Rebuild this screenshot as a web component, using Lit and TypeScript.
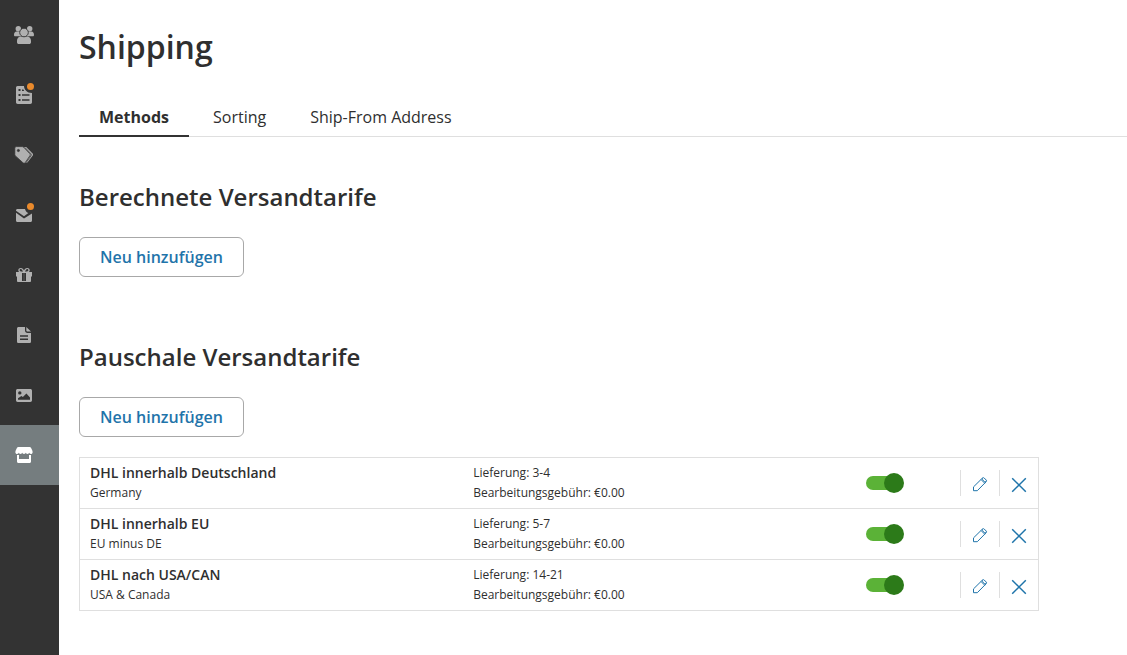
import { LitElement, html, css, svg, nothing } from "lit";
import { customElement, state } from "lit/decorators.js";

interface NavItem {
  label: string;
  icon: unknown;
  badge?: boolean;
}

interface ShippingRate {
  name: string;
  region: string;
  delivery: string;
  fee: string;
  enabled: boolean;
}

const icons = {
  customers: svg`
    <circle cx="4.300" cy="3.700" r="2.700"/><circle cx="15.700" cy="3.700" r="2.700"/>
    <path d="M2.600 6.600h5v4.600H1.300C.5 11.200 0 10.700 0 9.900 0 8.300 1 6.600 2.600 6.600zM17.400 6.600h-5v4.600h6.300c.8 0 1.300-.5 1.300-1.300 0-1.600-1-3.300-2.600-3.300z"/>
    <path d="M6.300 11.400h7.400c2 .4 3.300 2 3.300 4.300v1.500c0 1.100-.8 1.800-1.800 1.800H4.800c-1 0-1.800-.7-1.800-1.800v-1.500c0-2.300 1.300-3.900 3.300-4.300z"/>
    <circle cx="10" cy="7.500" r="4.300" stroke="#333" stroke-width="0.900"/>`,
  orders: svg`
    <path fill-rule="evenodd" d="M3.500 1H10c0 3.500 3 7 8 7v9.300c0 .9-.8 1.700-1.700 1.700H3.700C2.800 19 2 18.200 2 17.300V2.700C2 1.800 2.700 1 3.500 1zM4.500 4v2h2V4zM8 4.500V6h2.200l-.8-1.500zM4.500 9v2h2V9zM8 9.300v1.400h7.500V9.300zM4.500 14v2h2v-2zM8 14.200v1.500h7.500v-1.500z"/>`,
  catalog: svg`
    <path d="M9.500 2h2.700l6.200 6.200c.8.800.8 1.700.2 2.600l-5.200 6.700h-3z"/>
    <path fill-rule="evenodd" stroke="#333" stroke-width="0.800" d="M.8 3.400C.8 2.300 1.500 1.600 2.500 1.600h5.700c.6 0 1.100.2 1.500.6l6 6.400c.7.700.7 1.500.1 2.300l-4.500 6.600c-.6.900-1.600.9-2.400.2L1.400 10.900C1 10.500.8 10.100.8 9.500zM4.400 4.400a1.100 1.100 0 1 0 0 2.200 1.100 1.100 0 0 0 0-2.200z"/>
    <path d="M10.800 2.400l6.100 6.400c.6.600.6 1.300.1 2L12.300 17.300" fill="none" stroke="#333" stroke-width="0.700"/>`,
  marketing: svg`
    <path d="M3.500 4H11c.4 1.900 1.600 3.300 3.400 4.100L10 11.300 2 5.700C2 4.700 2.600 4 3.500 4zM18 8.500v7c0 .9-.6 1.500-1.500 1.500h-13C2.600 17 2 16.400 2 15.500V7.800l8 5.600z"/>`,
  promotions: svg`
    <path fill-rule="evenodd" d="M2 7h3.200C4.500 6.500 4.300 5.900 4.300 5.300c0-1.500 1.100-2.300 2.500-2.300C8.400 3 9.400 4 10 5.400 10.600 4 11.600 3 13.200 3c1.400 0 2.500.8 2.500 2.300 0 .6-.2 1.200-.9 1.700H18v4.500h-1v4.300c0 .8-.4 1.200-1.200 1.200H4.200c-.8 0-1.200-.4-1.200-1.200v-4.300H2zM6.800 4.100c-.7 0-1.200.5-1.200 1.200 0 .9.800 1.400 3.200 1.400-.4-1.500-1-2.600-2-2.600zm6.400 0c-1 0-1.600 1.100-2 2.600 2.400 0 3.200-.5 3.200-1.400 0-.7-.5-1.200-1.200-1.200zM8 8v8h4V8z"/><path d="M9.400 8h1.200v8H9.400z" opacity=".25"/>`,
  website: svg`
    <path fill-rule="evenodd" d="M4.600 2H11v3.500C11 7 12 8 13.500 8H17v8.400c0 .9-.7 1.600-1.600 1.600H4.600C3.700 18 3 17.300 3 16.400V3.600C3 2.700 3.700 2 4.600 2zM6 10.300v1.400h8v-1.400zM6 13.500V15h8v-1.500z"/><path d="M12.300 2L17 6.600h-3.300c-.8 0-1.400-.6-1.400-1.400z"/>`,
  media: svg`
    <path fill-rule="evenodd" d="M3.700 4h12.600c1 0 1.700.7 1.700 1.700v9.600c0 1-.7 1.700-1.700 1.700H3.700c-1 0-1.700-.7-1.700-1.700V5.700C2 4.700 2.700 4 3.700 4zM5.800 6.200a1.700 1.700 0 1 0 0 3.400 1.700 1.700 0 0 0 0-3.400zM4 14.800h12v-2.400l-3.600-4-3.500 3.500-1.500-1L4 13.200z"/>`,
  store: svg`
    <path d="M4.400 2h11.200c.7 0 1.200.3 1.500.9l1.200 2.600c.3.700.3 1.500.3 2 0 .8-.8 1.500-1.700 1.500s-1.700-.7-1.700-1.400c0 .7-.8 1.400-1.700 1.400s-1.700-.7-1.700-1.400c0 .7-.8 1.400-1.800 1.400s-1.800-.7-1.800-1.400c0 .7-.8 1.400-1.700 1.400s-1.700-.7-1.700-1.400c0 .7-.8 1.400-1.700 1.400S1.400 8.300 1.400 7.500c0-.5 0-1.300.3-2l1.200-2.600c.3-.6.8-.9 1.500-.9z"/>
    <path d="M3 10h2v4h10v-4h2v6.500c0 .9-.6 1.500-1.500 1.500h-11C3.600 18 3 17.400 3 16.500z"/>`,
};

const navItems: NavItem[] = [
  { label: "Customers", icon: icons.customers },
  { label: "Orders", icon: icons.orders, badge: true },
  { label: "Catalog", icon: icons.catalog },
  { label: "Marketing", icon: icons.marketing, badge: true },
  { label: "Promotions", icon: icons.promotions },
  { label: "Website", icon: icons.website },
  { label: "Media", icon: icons.media },
  { label: "Store", icon: icons.store },
];

@customElement("side-nav")
class SideNav extends LitElement {
  static styles = css`
    :host {
      display: block;
      background: #333;
    }
    .list {
      display: flex;
      flex-direction: column;
      padding-top: 5px;
    }
    .item {
      display: flex;
      align-items: center;
      height: 60px;
      padding-left: 14px;
      color: #b0b0b0;
    }
    .item.current {
      background: #757d7f;
      color: #fff;
    }
    .glyph {
      position: relative;
      width: 20px;
      height: 20px;
    }
    .glyph svg {
      display: block;
      width: 20px;
      height: 20px;
      fill: currentColor;
    }
    .badge {
      position: absolute;
      top: -2px;
      right: 0;
      width: 7px;
      height: 7px;
      border-radius: 50%;
      background: #ea8a2c;
    }
  `;

  render() {
    return html`<nav class="list" aria-label="Main">
      ${navItems.map(
        (item) => html`<a
          class="item ${item.label === "Store" ? "current" : ""}"
          href="#"
          aria-label=${item.label}
        >
          <span class="glyph">
            <svg viewBox="0 0 20 20" aria-hidden="true">${item.icon}</svg>
            ${item.badge ? html`<span class="badge"></span>` : nothing}
          </span>
        </a>`
      )}
    </nav>`;
  }
}

@customElement("rate-table")
class RateTable extends LitElement {
  static styles = css`
    :host {
      display: block;
      max-width: 960px;
    }
    .table {
      width: 100%;
      table-layout: fixed;
      border-collapse: separate;
      border-spacing: 0;
      border: 1px solid #dfdfdf;
      border-bottom: 0;
    }
    .cell {
      padding: 5px 10px;
      text-align: left;
      vertical-align: middle;
      font-size: 12px;
      font-weight: 400;
      line-height: 20px;
      border-bottom: 1px solid #dfdfdf;
    }
    .name {
      font-size: 14px;
      font-weight: 600;
    }
    .col-info {
      width: 40%;
    }
    .col-switch {
      width: 104px;
    }
    .col-actions {
      width: 78px;
    }
    .cell.flush {
      padding: 0;
    }
    .switch {
      appearance: none;
      display: block;
      position: relative;
      width: 34px;
      height: 14px;
      margin: 0 0 0 10px;
      border-radius: 7px;
      background: #b8b8b8;
      cursor: pointer;
    }
    .switch::before {
      content: "";
      position: absolute;
      top: -3px;
      left: -2px;
      width: 20px;
      height: 20px;
      border-radius: 50%;
      background: #777;
    }
    .switch:checked {
      background: #5bb237;
    }
    .switch:checked::before {
      left: 18px;
      background: #2c7a19;
    }
    .actions {
      display: flex;
    }
    .action {
      box-sizing: border-box;
      display: flex;
      flex: 1;
      align-items: center;
      justify-content: center;
      height: 26px;
      padding: 4px 0 0;
      border: 0;
      border-left: 1px solid #dfdfdf;
      background: none;
      color: #1f74aa;
      cursor: pointer;
    }
    .action svg {
      width: 16px;
      height: 16px;
      fill: none;
      stroke: currentColor;
    }
  `;

  @state()
  private rates: ShippingRate[] = [
    { name: "DHL innerhalb Deutschland", region: "Germany", delivery: "3-4", fee: "€0.00", enabled: true },
    { name: "DHL innerhalb EU", region: "EU minus DE", delivery: "5-7", fee: "€0.00", enabled: true },
    { name: "DHL nach USA/CAN", region: "USA & Canada", delivery: "14-21", fee: "€0.00", enabled: true },
  ];

  private toggle(index: number) {
    this.rates = this.rates.map((rate, i) =>
      i === index ? { ...rate, enabled: !rate.enabled } : rate
    );
  }

  private remove(index: number) {
    this.rates = this.rates.filter((_, i) => i !== index);
  }

  render() {
    return html`<table class="table">
      <colgroup>
        <col class="col-info" />
        <col />
        <col class="col-switch" />
        <col class="col-actions" />
      </colgroup>
      <tbody>
        ${this.rates.map(
          (rate, i) => html`<tr>
            <th class="cell" scope="row">
              <div class="name">${rate.name}</div>
              <div>${rate.region}</div>
            </th>
            <td class="cell">
              <div>Lieferung: ${rate.delivery}</div>
              <div>Bearbeitungsgebühr: ${rate.fee}</div>
            </td>
            <td class="cell flush">
              <input
                class="switch"
                type="checkbox"
                role="switch"
                aria-label=${rate.name}
                .checked=${rate.enabled}
                @change=${() => this.toggle(i)}
              />
            </td>
            <td class="cell flush">
              <div class="actions">
                <button class="action" type="button" aria-label="Edit">
                  <svg viewBox="0 0 16 16" aria-hidden="true">
                    <path d="M1.500 13.700v-3.800l9-8.900c.5-.5 1.200-.5 1.700 0l2 2c.5.500.5 1.200 0 1.700l-8.900 9zM9 2.500L12.700 6.200M10.300 1.200c.1 2 1.700 3.600 3.700 3.700" />
                  </svg>
                </button>
                <button class="action" type="button" aria-label="Delete" @click=${() => this.remove(i)}>
                  <svg viewBox="0 0 16 16" aria-hidden="true">
                    <path d="M1.200 1.200l13.600 13.600M14.800 1.200L1.200 14.800" stroke-width="1.500" />
                  </svg>
                </button>
              </div>
            </td>
          </tr>`
        )}
      </tbody>
    </table>`;
  }
}

@customElement("app-root")
class AppRoot extends LitElement {
  static styles = css`
    :host {
      display: grid;
      grid-template-columns: 59px 1fr;
      min-height: 100vh;
      background: #fff;
      color: #2f2f2f;
      font-family: "Open Sans", "Noto Sans", sans-serif;
    }
    .page {
      min-width: 0;
      padding: 23px 0 24px 20px;
    }
    .title {
      margin: 0;
      font-size: 32px;
      font-weight: 600;
      line-height: 48px;
    }
    .tabs {
      display: flex;
      gap: 4px;
      margin-top: 26px;
      border-bottom: 1px solid #dfdfdf;
    }
    .tab {
      padding: 8px 20px 6px;
      margin-bottom: -1px;
      border-bottom: 2px solid transparent;
      color: inherit;
      font-size: 16px;
      line-height: 24px;
      text-decoration: none;
    }
    .tab.active {
      border-color: #333;
      font-weight: 700;
    }
    .section {
      padding: 40px 88px 0 0;
    }
    .heading {
      margin: 0;
      font-size: 24px;
      font-weight: 600;
      line-height: 40px;
    }
    .add {
      display: block;
      height: 40px;
      margin: 20px 0;
      padding: 0 20px;
      border: 1px solid #a8a8a8;
      border-radius: 6px;
      background: #fff;
      color: #1f74aa;
      font-family: inherit;
      font-size: 16px;
      font-weight: 600;
      cursor: pointer;
    }
  `;

  @state()
  private tab = "Methods";

  private select(event: Event, tab: string) {
    event.preventDefault();
    this.tab = tab;
  }

  render() {
    return html`
      <side-nav></side-nav>
      <main class="page">
        <h1 class="title">Shipping</h1>
        <nav class="tabs" aria-label="Shipping">
          ${["Methods", "Sorting", "Ship-From Address"].map(
            (tab) => html`<a
              class="tab ${tab === this.tab ? "active" : ""}"
              href="#"
              @click=${(e: Event) => this.select(e, tab)}
              >${tab}</a
            >`
          )}
        </nav>
        <section class="section">
          <h2 class="heading">Berechnete Versandtarife</h2>
          <button class="add" type="button">Neu hinzufügen</button>
        </section>
        <section class="section">
          <h2 class="heading">Pauschale Versandtarife</h2>
          <button class="add" type="button">Neu hinzufügen</button>
          <rate-table></rate-table>
        </section>
      </main>
    `;
  }
}
